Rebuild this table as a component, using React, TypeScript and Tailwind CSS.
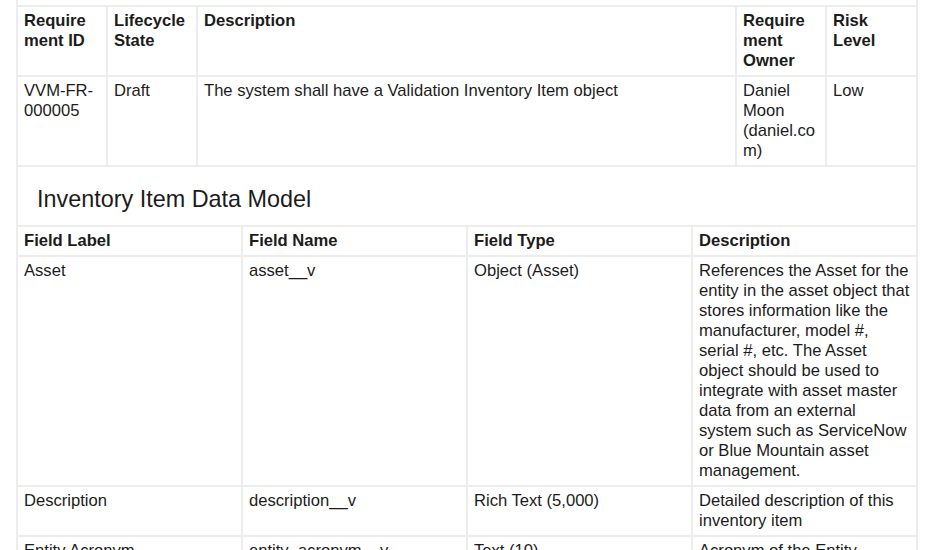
const requirements = [
  {
    id: 'VVM-FR-000005',
    state: 'Draft',
    description: 'The system shall have a Validation Inventory Item object',
    owner: 'Daniel Moon (daniel.com)',
    risk: 'Low',
  },
];

const fields = [
  {
    label: 'Asset',
    name: 'asset__v',
    type: 'Object (Asset)',
    description:
      'References the Asset for the entity in the asset object that stores information like the manufacturer, model #, serial #, etc. The Asset object should be used to integrate with asset master data from an external system such as ServiceNow or Blue Mountain asset management.',
  },
  {
    label: 'Description',
    name: 'description__v',
    type: 'Rich Text (5,000)',
    description: 'Detailed description of this inventory item',
  },
  {
    label: 'Entity Acronym',
    name: 'entity_acronym__v',
    type: 'Text (10)',
    description: 'Acronym of the Entity',
  },
];

const narrowCell = 'border-2 border-[#ededed] pl-[6px] pr-[8px] py-[4px] align-top break-words';
const wideCell = 'border-2 border-[#ededed] px-[6px] py-[4px] align-top break-words';

function App() {
  return (
    <div
      className="min-h-screen bg-white text-[#1c1c1c] text-[16.6px] leading-[20px]"
      style={{ fontFamily: '"Liberation Sans", Arial, sans-serif' }}
    >
      <div className="ml-[16px] w-[902px]">
        <div className="h-[5px] border-x-2 border-[#ededed]" />
        <table className="w-full table-fixed border-collapse">
          <colgroup>
            <col className="w-[90px]" />
            <col className="w-[90px]" />
            <col />
            <col className="w-[90px]" />
            <col className="w-[91px]" />
          </colgroup>
          <thead>
            <tr className="text-left font-bold">
              <th className={narrowCell}>Requirement ID</th>
              <th className={narrowCell}>Lifecycle State</th>
              <th className={narrowCell}>Description</th>
              <th className={narrowCell}>Requirement Owner</th>
              <th className={narrowCell}>Risk Level</th>
            </tr>
          </thead>
          <tbody>
            {requirements.map(req => (
              <tr key={req.id}>
                <td className={narrowCell}>{req.id}</td>
                <td className={narrowCell}>{req.state}</td>
                <td className={narrowCell}>{req.description}</td>
                <td className={narrowCell}>{req.owner}</td>
                <td className={narrowCell}>{req.risk}</td>
              </tr>
            ))}
          </tbody>
        </table>

        <div className="border-x-2 border-[#ededed] pl-[19px] pt-[18px] pb-[12px]">
          <h2 className="text-[23.4px] leading-[28px] font-normal">Inventory Item Data Model</h2>
        </div>

        <table className="w-full table-fixed border-collapse">
          <colgroup>
            <col className="w-[225px]" />
            <col className="w-[225px]" />
            <col className="w-[225px]" />
            <col />
          </colgroup>
          <thead>
            <tr className="text-left font-bold">
              <th className={wideCell}>Field Label</th>
              <th className={wideCell}>Field Name</th>
              <th className={wideCell}>Field Type</th>
              <th className={wideCell}>Description</th>
            </tr>
          </thead>
          <tbody>
            {fields.map(field => (
              <tr key={field.name}>
                <td className={wideCell}>{field.label}</td>
                <td className={wideCell}>{field.name}</td>
                <td className={wideCell}>{field.type}</td>
                <td className={wideCell}>{field.description}</td>
              </tr>
            ))}
          </tbody>
        </table>
      </div>
    </div>
  );
}

export default App;
